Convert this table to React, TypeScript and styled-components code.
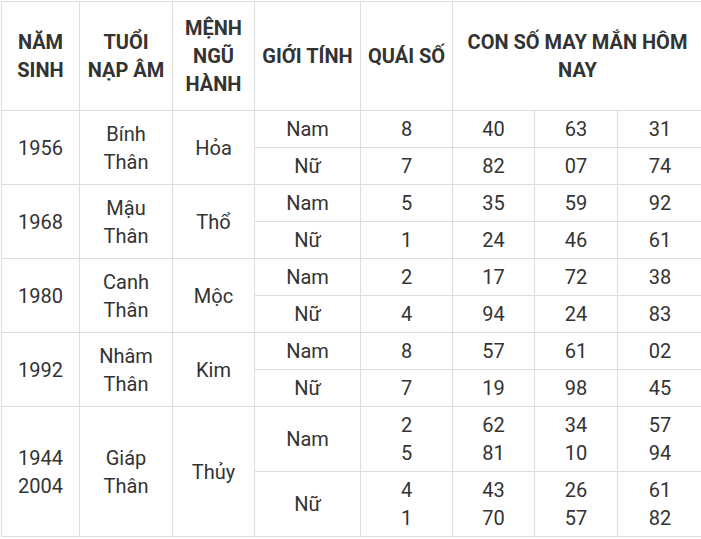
import React from "react";
import styled, { createGlobalStyle } from "styled-components";

const GlobalStyle = createGlobalStyle`
  html, body {
    margin: 0;
    padding: 0;
    background: #fff;
  }
  body {
    font-family: Roboto, "Noto Sans", "Liberation Sans", sans-serif;
    color: #333;
  }
`;

const Wrapper = styled.div`
  padding: 1px 0 0 1px;
  width: 702px;
`;

const Table = styled.table`
  border-collapse: collapse;
  table-layout: fixed;
  width: 701px;
  font-size: 20px;
  line-height: 28px;
  color: #333;
`;

const HeadCell = styled.th`
  border: 1px solid #ddd;
  padding: 12px 4px;
  font-weight: 700;
  text-align: center;
  vertical-align: middle;
`;

const Cell = styled.td`
  border: 1px solid #ddd;
  padding: 4px 4px;
  font-weight: 400;
  text-align: center;
  vertical-align: middle;
`;

interface Gender {
  label: string;
  quai: string[];
  nums: string[][];
}

interface Group {
  years: string[];
  tuoi: string[];
  menh: string;
  rows: Gender[];
}

const data: Group[] = [
  {
    years: ["1956"],
    tuoi: ["Bính", "Thân"],
    menh: "Hỏa",
    rows: [
      { label: "Nam", quai: ["8"], nums: [["40", "63", "31"]] },
      { label: "Nữ", quai: ["7"], nums: [["82", "07", "74"]] },
    ],
  },
  {
    years: ["1968"],
    tuoi: ["Mậu", "Thân"],
    menh: "Thổ",
    rows: [
      { label: "Nam", quai: ["5"], nums: [["35", "59", "92"]] },
      { label: "Nữ", quai: ["1"], nums: [["24", "46", "61"]] },
    ],
  },
  {
    years: ["1980"],
    tuoi: ["Canh", "Thân"],
    menh: "Mộc",
    rows: [
      { label: "Nam", quai: ["2"], nums: [["17", "72", "38"]] },
      { label: "Nữ", quai: ["4"], nums: [["94", "24", "83"]] },
    ],
  },
  {
    years: ["1992"],
    tuoi: ["Nhâm", "Thân"],
    menh: "Kim",
    rows: [
      { label: "Nam", quai: ["8"], nums: [["57", "61", "02"]] },
      { label: "Nữ", quai: ["7"], nums: [["19", "98", "45"]] },
    ],
  },
  {
    years: ["1944", "2004"],
    tuoi: ["Giáp", "Thân"],
    menh: "Thủy",
    rows: [
      {
        label: "Nam",
        quai: ["2", "5"],
        nums: [
          ["62", "34", "57"],
          ["81", "10", "94"],
        ],
      },
      {
        label: "Nữ",
        quai: ["4", "1"],
        nums: [
          ["43", "26", "61"],
          ["70", "57", "82"],
        ],
      },
    ],
  },
];

const widths = [78, 93, 82, 106, 92, 82, 83, 85];

const Lines = ({ items }: { items: string[] }) => (
  <>
    {items.map((t, i) => (
      <React.Fragment key={i}>
        {i > 0 && <br />}
        {t}
      </React.Fragment>
    ))}
  </>
);

const App = () => {
  return (
    <Wrapper>
      <GlobalStyle />
      <Table>
        <colgroup>
          {widths.map((w, i) => (
            <col key={i} style={{ width: w }} />
          ))}
        </colgroup>
        <thead>
          <tr>
            <HeadCell>NĂM SINH</HeadCell>
            <HeadCell>TUỔI NẠP ÂM</HeadCell>
            <HeadCell>MỆNH NGŨ HÀNH</HeadCell>
            <HeadCell>GIỚI TÍNH</HeadCell>
            <HeadCell>QUÁI SỐ</HeadCell>
            <HeadCell colSpan={3}>CON SỐ MAY MẮN HÔM NAY</HeadCell>
          </tr>
        </thead>
        <tbody>
          {data.map((g) =>
            g.rows.map((r, ri) => (
              <tr key={g.years[0] + r.label}>
                {ri === 0 && (
                  <>
                    <Cell rowSpan={2}>
                      <Lines items={g.years} />
                    </Cell>
                    <Cell rowSpan={2}>
                      <Lines items={g.tuoi} />
                    </Cell>
                    <Cell rowSpan={2}>{g.menh}</Cell>
                  </>
                )}
                <Cell>{r.label}</Cell>
                <Cell>
                  <Lines items={r.quai} />
                </Cell>
                {[0, 1, 2].map((c) => (
                  <Cell key={c}>
                    <Lines items={r.nums.map((line) => line[c])} />
                  </Cell>
                ))}
              </tr>
            ))
          )}
        </tbody>
      </Table>
    </Wrapper>
  );
};

export default App;
